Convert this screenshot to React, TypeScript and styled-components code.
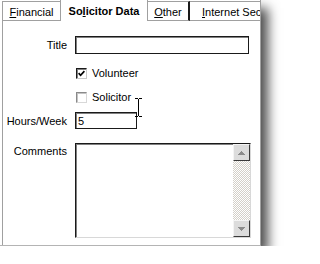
import React from 'react';
import styled, {createGlobalStyle} from 'styled-components';

const GlobalStyle = createGlobalStyle`
  html, body {
    margin: 0;
    padding: 0;
    background: #fff;
  }
  body {
    font-family: "Liberation Sans", Arial, sans-serif;
    font-size: 11px;
    color: #000;
  }
`;

const Window = styled.div`
  position: relative;
  box-sizing: border-box;
  width: 261px;
  height: 246px;
  padding-left: 2px;
  background: #fff;
  border-right: 1px solid #a0a0a0;
  border-bottom: 1px solid #b4b4b4;
  box-shadow: 7px 8px 11px rgba(0, 0, 0, 0.7);
  display: flex;
  flex-direction: column;
  overflow: hidden;
`;

const TabStrip = styled.div`
  display: flex;
  align-items: flex-end;
  height: 21px;
  flex-shrink: 0;
  white-space: nowrap;
`;

const Tab = styled.div<{ $w?: number; $active?: boolean; $lead?: boolean; $divider?: boolean }>`
  box-sizing: border-box;
  flex-shrink: 0;
  width: ${p => (p.$w ? `${p.$w}px` : 'auto')};
  height: ${p => (p.$active ? 21 : 20)}px;
  padding: 1px 12px 0;
  display: flex;
  align-items: center;
  justify-content: center;
  font-weight: ${p => (p.$active ? 'bold' : 'normal')};
  border-top: ${p => (p.$active ? 'none' : '1px solid #a0a0a0')};
  border-bottom: ${p => (p.$active ? 'none' : '1px solid #a0a0a0')};
  border-left: ${p => (p.$lead ? '1px solid #a0a0a0' : 'none')};
  border-right: ${p =>
    p.$divider ? '2px solid #1a1a1a' : p.$active ? '1px solid #a0a0a0' : 'none'};
`;

const Key = styled.span`
  text-decoration: underline;
`;

const Panel = styled.div`
  flex: 1;
  border-left: 1px solid #a0a0a0;
  padding-top: 15px;
  display: flex;
  flex-direction: column;
`;

const Row = styled.div<{ $top: number; $align?: string }>`
  display: grid;
  grid-template-columns: 64px auto;
  column-gap: 8px;
  align-items: ${p => p.$align ?? 'center'};
  margin-top: ${p => p.$top}px;
`;

const Label = styled.div<{ $pad?: number }>`
  text-align: right;
  padding-top: ${p => p.$pad ?? 0}px;
`;

const TextField = styled.div<{ $w: number; $h: number }>`
  box-sizing: border-box;
  width: ${p => p.$w}px;
  height: ${p => p.$h}px;
  padding-left: 2px;
  display: flex;
  align-items: center;
  background: #fff;
  border: 1px solid #1a1a1a;
  box-shadow: inset 1px 1px 0 #808080;
`;

const CheckRow = styled.label`
  height: 16px;
  display: flex;
  align-items: center;
  gap: 5px;
  padding-left: 1px;
`;

const CheckBox = styled.span<{ $checked?: boolean }>`
  box-sizing: border-box;
  width: 11px;
  height: 11px;
  display: flex;
  align-items: center;
  justify-content: center;
  background: #fff;
  border: 1px solid;
  border-color: ${p =>
    p.$checked ? '#1a1a1a #c8c8c8 #c8c8c8 #1a1a1a' : '#8a8a8a #d8d8d8 #d8d8d8 #8a8a8a'};
  box-shadow: ${p => (p.$checked ? 'inset 1px 1px 0 #808080' : 'inset 1px 1px 0 #c4c4c4')};
`;

const Memo = styled.div`
  box-sizing: border-box;
  width: 176px;
  height: 95px;
  display: flex;
  justify-content: flex-end;
  background: #fff;
  border: 1px solid;
  border-color: #1a1a1a #d8d8d8 #d8d8d8 #1a1a1a;
  box-shadow: inset 1px 1px 0 #808080;
`;

const ScrollBar = styled.div`
  width: 17px;
  display: flex;
  flex-direction: column;
`;

const ScrollButton = styled.div`
  box-sizing: border-box;
  height: 17px;
  display: flex;
  align-items: center;
  justify-content: center;
  background: #dcdcdc;
  border: 1px solid;
  border-color: #f4f4f4 #3a3a3a #3a3a3a #f4f4f4;
`;

const Track = styled.div`
  flex: 1;
  background: repeating-conic-gradient(#d4d0c8 0% 25%, #ffffff 0% 50%) 0 0 / 2px 2px;
`;

const Cursor = styled.svg`
  position: absolute;
  left: 135px;
  top: 98px;
`;

const Arrow = ({down}: { down?: boolean }) => (
  <svg width="7" height="4" viewBox="0 0 7 4" shapeRendering="crispEdges">
    <path d={down ? 'M0 0H7L3.5 4Z' : 'M0 4H7L3.5 0Z'} fill="#8c8c8c"/>
  </svg>
);

const App: React.FC = () => {
  return (
    <>
      <GlobalStyle/>
      <Window>
        <TabStrip>
          <Tab $w={58} $lead><span><Key>F</Key>inancial</span></Tab>
          <Tab $w={88} $active $lead><span>So<Key>l</Key>icitor Data</span></Tab>
          <Tab $w={42} $divider><span><Key>O</Key>ther</span></Tab>
          <Tab><span><Key>I</Key>nternet Security</span></Tab>
        </TabStrip>
        <Panel>
          <Row $top={0}>
            <Label>Title</Label>
            <TextField $w={174} $h={18}/>
          </Row>
          <Row $top={11}>
            <span/>
            <CheckRow>
              <CheckBox $checked>
                <svg width="7" height="7" viewBox="0 0 7 7">
                  <path d="M0.6 3.2 L2.6 5.3 L6.4 1.2" fill="none" stroke="#000" strokeWidth="1.7"/>
                </svg>
              </CheckBox>
              Volunteer
            </CheckRow>
          </Row>
          <Row $top={8}>
            <span/>
            <CheckRow>
              <CheckBox/>
              Solicitor
            </CheckRow>
          </Row>
          <Row $top={7}>
            <Label>Hours/Week</Label>
            <TextField $w={62} $h={17}>5</TextField>
          </Row>
          <Row $top={14} $align="start">
            <Label $pad={2}>Comments</Label>
            <Memo>
              <ScrollBar>
                <ScrollButton><Arrow/></ScrollButton>
                <Track/>
                <ScrollButton><Arrow down/></ScrollButton>
              </ScrollBar>
            </Memo>
          </Row>
        </Panel>
        <Cursor width="7" height="19" viewBox="0 0 7 19" shapeRendering="crispEdges">
          <path d="M0 0H3V1H0Z M4 0H7V1H4Z M3 1H4V18H3Z M0 18H3V19H0Z M4 18H7V19H4Z" fill="#000"/>
        </Cursor>
      </Window>
    </>
  );
};

export default App;
